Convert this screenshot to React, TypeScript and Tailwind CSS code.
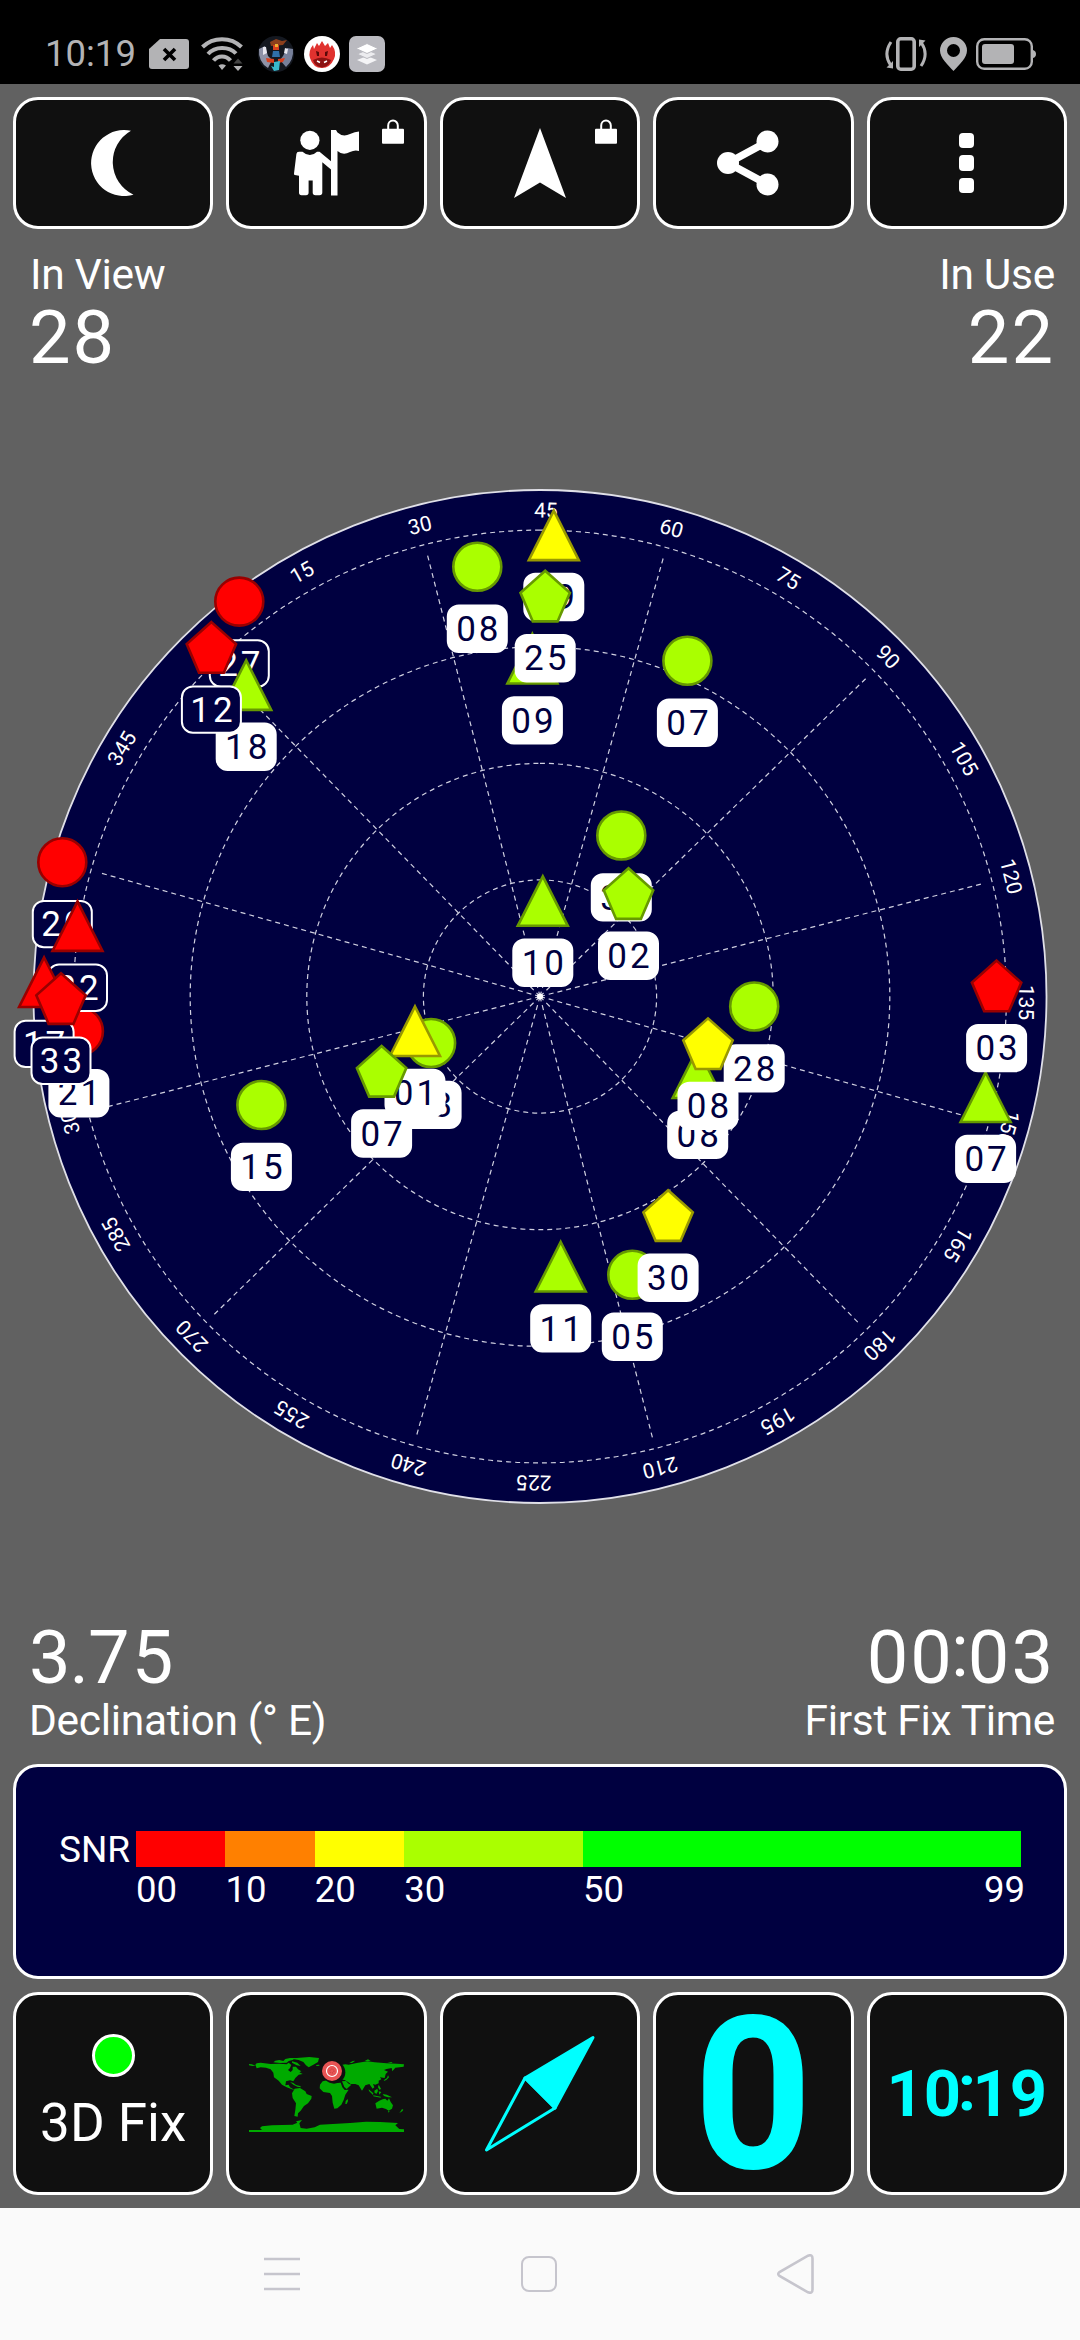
import React from 'react';
import clsx from 'clsx';

type Shape = 'circle' | 'triangle' | 'pentagon';
type Level = 'red' | 'yellow' | 'lime';

interface Satellite {
  id: string;
  shape: Shape;
  level: Level;
  x: number;
  y: number;
  unused?: boolean;
}

// Offsets are measured from the zenith (centre of the sky plot)
const satellites: Satellite[] = [
  { id: '08', shape: 'circle', level: 'lime', x: -62.7, y: -429.7 },
  { id: '07', shape: 'circle', level: 'lime', x: 147.4, y: -335.7 },
  { id: '30', shape: 'circle', level: 'lime', x: 81.3, y: -161 },
  { id: '15', shape: 'circle', level: 'lime', x: -278.6, y: 108.5 },
  { id: '13', shape: 'circle', level: 'lime', x: -108.9, y: 46.5 },
  { id: '21', shape: 'circle', level: 'red', x: -461.1, y: 34.8 },
  { id: '27', shape: 'circle', level: 'red', x: -300.7, y: -394.9, unused: true },
  { id: '20', shape: 'circle', level: 'red', x: -477.7, y: -134.3, unused: true },
  { id: '28', shape: 'circle', level: 'lime', x: 214.2, y: 10 },
  { id: '05', shape: 'circle', level: 'lime', x: 92.3, y: 278.3 },
  { id: '19', shape: 'triangle', level: 'yellow', x: 13.8, y: -461.4 },
  { id: '09', shape: 'triangle', level: 'lime', x: -7.6, y: -338 },
  { id: '10', shape: 'triangle', level: 'lime', x: 2.8, y: -95.7 },
  { id: '18', shape: 'triangle', level: 'lime', x: -293.8, y: -311.6 },
  { id: '22', shape: 'triangle', level: 'red', x: -462.5, y: -70.6, unused: true },
  { id: '17', shape: 'triangle', level: 'red', x: -495.9, y: -14.5, unused: true },
  { id: '01', shape: 'triangle', level: 'yellow', x: -125, y: 34.5 },
  { id: '11', shape: 'triangle', level: 'lime', x: 20.7, y: 270 },
  { id: '08', shape: 'triangle', level: 'lime', x: 157.7, y: 76.5 },
  { id: '07', shape: 'triangle', level: 'lime', x: 445.6, y: 100.5 },
  { id: '12', shape: 'pentagon', level: 'red', x: -328.6, y: -348.8, unused: true },
  { id: '33', shape: 'pentagon', level: 'red', x: -479, y: 2.4, unused: true },
  { id: '25', shape: 'pentagon', level: 'lime', x: 5.2, y: -400.1 },
  { id: '02', shape: 'pentagon', level: 'lime', x: 88.5, y: -102.6 },
  { id: '03', shape: 'pentagon', level: 'red', x: 456.6, y: -10.3 },
  { id: '07', shape: 'pentagon', level: 'lime', x: -158.4, y: 75.1 },
  { id: '08', shape: 'pentagon', level: 'yellow', x: 168, y: 47.5 },
  { id: '30', shape: 'pentagon', level: 'yellow', x: 128.1, y: 219.4 },
];

const levelClass: Record<Level, string> = {
  red: 'fill-[#ff0000] stroke-[#990000]',
  yellow: 'fill-[#ffff00] stroke-[#999900]',
  lime: 'fill-[#aaff00] stroke-[#669900]',
};

const HEADING = 44.3;
const RINGS = [116.6, 233.2, 349.8, 466.4];
const SPOKES = Array.from({ length: 12 }, (_, i) => i * 30);
const BEARINGS = Array.from({ length: 24 }, (_, i) => i * 15).filter((b) => b % 360 !== 0 && b !== 315 && b !== 330);

const Marker: React.FC<{ sat: Satellite }> = ({ sat }) => (
  <g transform={`translate(${sat.x} ${sat.y})`}>
    <g className={levelClass[sat.level]} strokeWidth="2.6">
      {sat.shape === 'circle' && <circle r="24" />}
      {sat.shape === 'triangle' && <path d="M0 -24.5 L25 25 H-25 Z" />}
      {sat.shape === 'pentagon' && <path d="M0 -25.6 L24.7 -3.6 L12.4 25 H-12.4 L-24.7 -3.6 Z" />}
    </g>
    <rect
      x="-29.5"
      y="38.7"
      width="59"
      height="46.4"
      rx="11"
      strokeWidth="2"
      className={clsx('stroke-white', sat.unused ? 'fill-[#000040]' : 'fill-white')}
    />
    <text
      x="1.5"
      y="74"
      textAnchor="middle"
      className={clsx('text-[35px] tracking-[3px]', sat.unused ? 'fill-white' : 'fill-[#000040]')}
    >
      {sat.id}
    </text>
  </g>
);

const SkyPlot = () => (
  <svg viewBox="-540 -621.5 1080 1245" className="w-[1080px] h-[1245px] block">
    <circle r="506.5" className="fill-[#000040] stroke-[#e0e0e8]" strokeWidth="1.8" />
    <g className="fill-none stroke-[#d0d0e0]" strokeWidth="1.2" strokeDasharray="5 4">
      {RINGS.map((r) => (
        <circle key={r} r={r} transform="rotate(-90)" />
      ))}
      {SPOKES.map((a) => (
        <line key={a} y1="0" y2="-459" transform={`rotate(${a - HEADING})`} />
      ))}
    </g>
    <circle r="3" className="fill-white" />
    {BEARINGS.map((b) => (
      <text
        key={b}
        y="-479"
        textAnchor="middle"
        transform={`rotate(${b - HEADING})`}
        className="fill-white text-[21px]"
      >
        {b}
      </text>
    ))}
    {satellites.map((sat, i) => (
      <Marker key={i} sat={sat} />
    ))}
  </svg>
);

const Tile: React.FC<{ className?: string; children: React.ReactNode }> = ({ className, children }) => (
  <button
    className={clsx(
      'relative flex-1 flex flex-col items-center justify-center bg-[#101010] border-[3.5px] border-white rounded-[25px]',
      className
    )}
  >
    {children}
  </button>
);

const Lock = () => (
  <svg viewBox="0 0 22 25" className="absolute top-[19px] right-[20px] w-[22px] h-[25px]">
    <path d="M6.2 10 V6.5 a4.8 5 0 0 1 9.6 0 V10" className="fill-none stroke-white" strokeWidth="2" />
    <rect y="9.7" width="22" height="15" rx="1" className="fill-white" />
  </svg>
);

const StatusBar = () => (
  <div className="h-[84px] bg-black flex items-center justify-between pl-[45px] pr-[44px] pt-6 text-[#b3b3b5]">
    <div className="flex items-center">
      <span className="text-[36.5px] leading-[40px] w-[104px]">10:19</span>
      <svg viewBox="0 0 40 30" className="w-[40px] h-[30px] mr-3">
        <path d="M11 0 H37 a3 3 0 0 1 3 3 V27 a3 3 0 0 1 -3 3 H3 a3 3 0 0 1 -3 -3 V10 Z" fill="currentColor" />
        <path d="M15 10 L26 21 M26 10 L15 21" className="stroke-black" strokeWidth="3.6" />
      </svg>
      <svg viewBox="0 0 42 34" className="w-[42px] h-[34px] mr-[15px]">
        <g className="fill-none" stroke="currentColor" strokeWidth="4">
          <path d="M1.5 10 C12 -0.5 30 -0.5 40.5 10" />
          <path d="M7 17 C14 9 28 9 35 16.5" />
          <path d="M12.5 23.5 C17 18 25 18 29.5 23.5" />
        </g>
        <path d="M21 33 L17.5 28.5 Q21 26 25 28.5 Z M32.5 29 H41.5 L37 34 Z" fill="currentColor" />
        <path d="M32.5 26.5 H41.5 L37 21.5 Z" className="fill-[#444]" />
      </svg>
      <svg viewBox="0 0 36 36" className="w-9 h-9 mr-[10px]">
        <circle cx="18" cy="18" r="18" className="fill-[#141820]" />
        <path d="M1 13 L7 10 L10 20 L14 24 L10 32 Q0 26 1 13 Z" className="fill-[#8f93a8]" />
        <path d="M35 13 L29 12 L25 20 L22 24 L28 31 Q36 24 35 13 Z" className="fill-[#77809a]" />
        <path d="M5 11 l3 0 l1 6 l-4 2 z M27 12 l3 1 l-1 5 l-3 -1 z" className="fill-[#e8e8f0]" />
        <path d="M12 6 L18 3 L24 5 L29 4 L25 9 L13 10 Z" className="fill-[#8c3f1c]" />
        <path d="M15 9 h6 v5 h-6 z M8 22 l8 1 v4 l-7 -1 z M20 23 l7 -1 l-2 4 l-5 1 z" className="fill-[#d8401e]" />
        <path d="M17 8 h3 v3 h-3 z" className="fill-[#f0b030]" />
        <path d="M15 15 h6 l1 6 h-8 z" className="fill-[#2f6fa8]" />
        <path d="M16 26 l6 -1 l-1 9 l-5 1 z M13 30 l3 1 v4 z" className="fill-[#38b8cc]" />
      </svg>
      <svg viewBox="0 0 36 36" className="w-9 h-9 mr-[9px]">
        <circle cx="18" cy="18" r="18" className="fill-white" />
        <path
          d="M6 22 Q4 15 9 9 L10 13 L13 7 L15 10 L18 5 L21 10 L24 7 L26 12 L28 9 Q33 16 30 23 Q26 32 18 32 Q9 32 6 22 Z"
          className="fill-[#e0322f]"
        />
        <path d="M9 24 Q18 19 27 24 Q25 31 18 31.5 Q11 31 9 24 Z" className="fill-[#8c1212]" />
        <path d="M12 15 l3 1 v4 l-2 0 z M24 15 l-3 1 v4 l2 0 z" className="fill-[#5a0808]" />
        <path d="M13 25 l3 1.5 M23 25 l-3 1.5" className="stroke-white" strokeWidth="1.5" />
      </svg>
      <svg viewBox="0 0 36 36" className="w-9 h-9">
        <rect width="36" height="36" rx="7" className="fill-[#babac0]" />
        <path d="M18 20 L28 24 L18 28.5 L8 24 Z" className="fill-[#f4f4f6]" />
        <path d="M18 14 L28 18 L18 22.5 L8 18 Z" className="fill-[#ececef] stroke-[#babac0]" strokeWidth="1" />
        <path d="M18 7.5 L29 12.5 L18 17.5 L7 12.5 Z" className="fill-white stroke-[#babac0]" strokeWidth="1" />
      </svg>
    </div>
    <div className="flex items-center">
      <svg viewBox="0 0 44 34" className="w-[44px] h-[34px] mr-3">
        <rect x="13.8" y="1.8" width="16.4" height="30.4" rx="3" className="fill-none" stroke="currentColor" strokeWidth="3.6" />
        <path d="M7 5 Q-1 17 6.5 28 M37 29 Q45 17 37.5 6" className="fill-none" stroke="currentColor" strokeWidth="3" />
        <path d="M2.5 30.5 L9 31.5 V24 Z M41.5 3.5 L35 2.5 V10 Z" fill="currentColor" />
      </svg>
      <svg viewBox="0 0 27 34" className="w-[27px] h-[34px] mr-[9px]">
        <path
          fillRule="evenodd"
          fill="currentColor"
          d="M13.5 0 A13.5 13.5 0 0 1 27 13.5 C27 21 19 28 13.5 34 C8 28 0 21 0 13.5 A13.5 13.5 0 0 1 13.5 0 Z M13.5 7 a6.5 6.5 0 1 0 0 13 a6.5 6.5 0 1 0 0 -13 Z"
        />
      </svg>
      <svg viewBox="0 0 60 32" className="w-[60px] h-[32px]">
        <rect x="1.2" y="1.2" width="54.6" height="29.6" rx="7" className="fill-none" stroke="currentColor" strokeWidth="2.4" />
        <rect x="6" y="6" width="32" height="20" rx="3" fill="currentColor" />
        <path d="M57 12 q3 1 3 4 q0 3 -3 4 z" fill="currentColor" />
      </svg>
    </div>
  </div>
);

const WorldMap = () => (
  <svg viewBox="27 21 465 228" className="w-[155px] h-[76px] mt-[3px]">
    <g className="fill-[#00aa00]">
      <path d="M27 42 l8 1 l12 4 l-10 1 l-10 -2 z" />
      <path d="M46 44 L50 40 L62 38 L92 42 L118 41 L140 43 L146 38 L154 45 L150 54 L144 60 L152 66 L158 60 L158 50 L168 50 L174 58 L184 64 L178 67 L188 72 L176 74 L166 84 L160 94 L150 91 L138 94 L136 106 L146 104 L150 112 L164 120 L156 118 L140 112 L126 104 L116 92 L102 82 L100 68 L92 58 L78 53 L62 52 L50 55 Z" />
      <path d="M100 37 L106 32 L118 30 L130 33 L136 27 L150 24 L166 24 L158 30 L146 33 L140 38 L120 39 Z M156 34 l16 4 l10 10 l-12 -2 l-14 -8 z" />
      <path d="M146 25 L170 24 L208 21 L237 24 L234 36 L220 44 L206 52 L198 46 L190 36 L176 30 Z M228 45 l10 -1 l0 3 l-8 1 z" />
      <path d="M150 96 l10 3 l8 6 l14 4 l0 3 l-10 -2 l-12 -6 z" />
      <path d="M164 116 L180 114 L196 124 L200 132 L215 138 L214 146 L204 160 L192 168 L182 182 L174 190 L173 200 L163 198 L166 180 L168 160 L158 144 L156 130 Z" />
      <path d="M248 94 L262 91 L270 95 L290 98 L302 98 L307 112 L314 120 L326 119 L316 134 L311 150 L304 164 L292 175 L283 176 L278 158 L276 138 L270 129 L250 126 L239 115 L240 104 Z" />
      <path d="M317 153 l6 -6 l1 6 l-4 9 l-4 0 z" />
      <path d="M306 94 L318 93 L326 101 L334 104 L320 117 L313 111 Z" />
      <path d="M300 46 L316 43 L326 44 L350 39 L382 34 L404 37 L440 40 L470 41 L492 43 L491 50 L466 53 L457 64 L455 54 L440 57 L432 60 L444 65 L437 72 L434 84 L420 82 L424 88 L416 92 L416 100 L406 104 L399 102 L403 112 L398 116 L388 102 L376 106 L366 122 L356 106 L346 102 L332 102 L324 96 L314 90 L300 88 Z" />
      <path d="M328 39 l10 -6 l8 -1 l-10 7 z M374 33 l10 -5 l8 5 z M442 36 l16 0 l-4 3 z" />
      <path d="M444 76 l3 6 l-8 8 l-8 3 l2 -4 l8 -5 z M386 118 l14 12 l-1 5 l-12 -12 z M403 122 l9 -6 l2 7 l-4 8 l-6 -2 z M400 136 l22 4 l0 3 l-22 -4 z M416 104 l7 12 l-4 4 l-5 -8 z M416 124 l8 2 l-6 8 z M428 132 l12 2 l16 8 l-12 0 l-12 -4 z" />
      <path d="M406 160 L418 152 L428 148 L436 146 L442 152 L447 145 L452 156 L459 166 L456 176 L446 182 L438 177 L426 173 L410 176 Z" />
      <path d="M486 177 l4 2 l-3 5 l-9 5 l5 -7 z M444 183 l5 1 l-3 4 z" />
      <path d="M27 240 H66 L60 234 L66 229 L96 226 L158 224 L172 218 L168 214 L186 210 L178 220 L182 234 L200 236 L224 232 L240 224 L330 219 L378 215 L420 216 L474 219 L466 226 L478 237 L492 238 V246 H27 Z" />
    </g>
    <circle cx="282" cy="67" r="34" className="fill-[#101010]" />
    <circle cx="276" cy="63" r="30" className="fill-[#e85454]" />
    <circle cx="276" cy="63" r="16.5" className="fill-none stroke-white" strokeWidth="3.5" />
    <circle cx="276" cy="63" r="6" className="fill-none stroke-[#b83030]" strokeWidth="2.5" strokeDasharray="2.5 3.5" />
  </svg>
);

const snrBands = [
  { from: '00', width: 'w-[89.4px]', color: 'bg-[#ff0000]' },
  { from: '10', width: 'w-[89.4px]', color: 'bg-[#ff8000]' },
  { from: '20', width: 'w-[89.4px]', color: 'bg-[#ffff00]' },
  { from: '30', width: 'w-[178.8px]', color: 'bg-[#aaff00]' },
  { from: '50', width: 'w-[438px]', color: 'bg-[#00ff00]' },
];

export default function App() {
  return (
    <div className="w-[1080px] h-[2340px] flex flex-col bg-[#616161] text-white font-['Roboto',sans-serif] overflow-hidden">
      <StatusBar />

      {/* Toolbar */}
      <div className="flex gap-[13px] px-[13px] pt-[13px] h-[145px]">
        <Tile>
          <svg viewBox="0 0 44 66" className="w-[44px] h-[66px] -ml-[3px]">
            <path d="M41 0.8 A33 33 0 1 0 43.5 64.7 A36 36 0 0 1 41 0.8 Z" className="fill-white" />
          </svg>
        </Tile>
        <Tile>
          <svg viewBox="0 0 65 66" className="w-[65px] h-[66px]">
            <g className="fill-white">
              <circle cx="15.9" cy="10.3" r="9.6" />
              <path d="M2.4 24 Q2.6 21.7 5 21.7 H8.5 Q16 28.5 23 21.7 L25.5 21.7 L37 31.3 V39.5 L28.3 32.3 V62.5 Q28.3 65.3 25.5 65.3 H21.5 Q18.7 65.3 18.7 62.5 V50.5 H14.6 V62.5 Q14.6 65.3 12 65.3 H7.5 Q5 65.3 5 62.5 V45.7 L0.8 45 Q0 45 0 43.5 Z" />
              <path d="M37 0 H42 L43.5 2.5 Q49 7.5 56 4 Q61 1.5 65 1.5 V21 Q61 19.5 56 22 Q49 26 43.5 21 V65.5 H37 Z" />
            </g>
          </svg>
          <Lock />
        </Tile>
        <Tile>
          <svg viewBox="0 0 52 70" className="w-[52px] h-[70px]">
            <path d="M26 0 L52 70 L26 54.5 L0 70 Z" className="fill-white" />
          </svg>
          <Lock />
        </Tile>
        <Tile>
          <svg viewBox="0 0 62 66" className="w-[62px] h-[66px] -ml-[10px]">
            <path d="M50.5 11.5 L11 33 L50.5 54.5" className="fill-none stroke-white" strokeWidth="7.5" />
            <g className="fill-white">
              <circle cx="50.5" cy="11.5" r="11" />
              <circle cx="11" cy="33" r="11" />
              <circle cx="50.5" cy="54.5" r="11" />
            </g>
          </svg>
        </Tile>
        <Tile className="gap-[7px]">
          <span className="w-[15px] h-[15.5px] rounded-[4px] bg-white" />
          <span className="w-[15px] h-[15.5px] rounded-[4px] bg-white" />
          <span className="w-[15px] h-[15.5px] rounded-[4px] bg-white" />
        </Tile>
      </div>

      <div className="flex justify-between pl-[29px] pr-[25px] pt-5 h-[146px]">
        <div>
          <p className="text-[42.5px] leading-[51px] tracking-[-0.3px] pl-[1px]">In View</p>
          <p className="text-[74px] leading-[75px] tracking-[2px]">28</p>
        </div>
        <div className="text-right">
          <p className="text-[42.5px] leading-[51px] tracking-[-0.3px]">In Use</p>
          <p className="text-[74px] leading-[75px] tracking-[2px]">22</p>
        </div>
      </div>

      <SkyPlot />

      <div className="flex justify-between pl-[29px] pr-[25px] h-[144px]">
        <div>
          <p className="text-[74px] leading-[75px] tracking-[2px]">
            3<span className="-mx-[3px]">.</span>75
          </p>
          <p className="text-[42.5px] leading-[51px] tracking-[-0.3px]">Declination (° E)</p>
        </div>
        <div className="text-right">
          <p className="text-[74px] leading-[75px] tracking-[2px]">
            00<span className="relative -top-[7px] -mx-[3px]">:</span>03
          </p>
          <p className="text-[42.5px] leading-[51px] tracking-[-0.3px]">First Fix Time</p>
        </div>
      </div>

      {/* SNR legend */}
      <div className="mx-[13px] h-[215px] bg-[#000040] border-[3.5px] border-white rounded-[25px] flex pt-[63.5px] pl-[43px]">
        <span className="text-[37px] leading-[37px] w-[77px]">SNR</span>
        <div className="relative">
          <div className="flex">
            {snrBands.map((band) => (
              <div key={band.from} className={band.width}>
                <div className={clsx('h-9', band.color)} />
                <p className="text-[36.5px] leading-[45px]">{band.from}</p>
              </div>
            ))}
          </div>
          <span className="absolute -right-[4px] top-9 text-[36.5px] leading-[45px]">99</span>
        </div>
      </div>

      {/* Page shortcuts */}
      <div className="flex gap-[13px] px-[13px] pt-[13px] h-[216px]">
        <Tile>
          <span className="w-[43px] h-[43px] rounded-full bg-[#00ff00] border-[3.5px] border-white" />
          <span className="text-[53px] leading-[62px] mt-[15px]">3D Fix</span>
        </Tile>
        <Tile>
          <WorldMap />
        </Tile>
        <Tile>
          <svg viewBox="0 0 112 118" className="w-[112px] h-[118px]">
            <g className="stroke-[#00ffff]" strokeWidth="3" strokeLinejoin="round">
              <path d="M41 43 L71 73 L2.5 115 Z" className="fill-none" />
              <path d="M41 43 L109 2.5 L71 73 Z" className="fill-[#00ffff]" />
            </g>
          </svg>
        </Tile>
        <Tile>
          <span className="text-[213px] leading-[190px] font-bold text-[#00ffff] mt-[2px] scale-x-[0.97]">0</span>
        </Tile>
        <Tile>
          <span className="text-[65px] leading-[70px] font-bold text-[#00ffff]">
            10<span className="relative -top-[6px] -mx-[3.5px]">:</span>19
          </span>
        </Tile>
      </div>

      <div className="mt-[13px] flex-1 bg-[#fafafa] relative flex items-center justify-between pl-[264px] pr-[266px]">
        <svg viewBox="0 0 36 34" className="w-9 h-[34px]">
          <path d="M0 2 H36 M0 17 H36 M0 32 H36" className="stroke-[#c6c5cd]" strokeWidth="2.6" />
        </svg>
        <span className="w-[36px] h-[36px] rounded-[8px] border-[2.5px] border-[#c6c5cd]" />
        <svg viewBox="0 0 37 40" className="w-[37px] h-[40px]">
          <path
            d="M2.5 18 Q0 20 2.5 22 L31 38.3 Q35.5 40 35.5 35.5 V4.5 Q35.5 0 31 1.7 Z"
            className="fill-none stroke-[#c6c5cd]"
            strokeWidth="2.6"
          />
        </svg>
      </div>
    </div>
  );
}
